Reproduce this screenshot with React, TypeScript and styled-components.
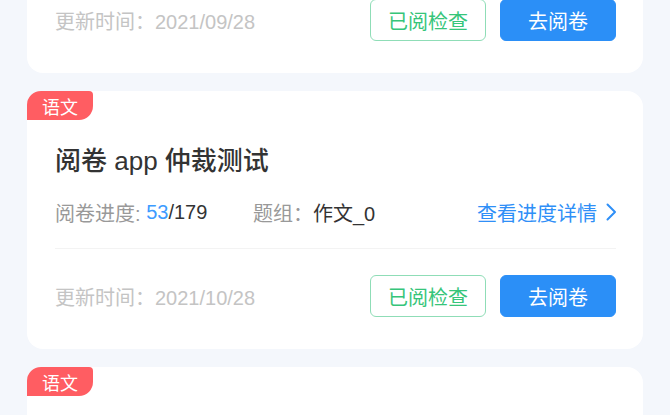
import styled, { createGlobalStyle } from 'styled-components';

type Task = {
  subject: string;
  title: string;
  done: number;
  total: number;
  group: string;
  updated: string;
};

const tasks: Task[] = [
  { subject: '语文', title: '阅卷 app 测试', done: 12, total: 179, group: '作文_0', updated: '2021/09/28' },
  { subject: '语文', title: '阅卷 app 仲裁测试', done: 53, total: 179, group: '作文_0', updated: '2021/10/28' },
  { subject: '语文', title: '阅卷 app 复评测试', done: 0, total: 179, group: '作文_0', updated: '2021/10/28' },
];

function ChevronRight() {
  return (
    <svg width="12" height="18" viewBox="0 0 12 18" fill="none">
      <polyline points="2.5,1.5 10,9 2.5,16.5" stroke="#2f8ff7" strokeWidth="2" strokeLinecap="round" strokeLinejoin="round" />
    </svg>
  );
}

function TaskCard({ task }: { task: Task }) {
  return (
    <Card>
      <SubjectTag>{task.subject}</SubjectTag>
      <Title>{task.title}</Title>
      <InfoRow>
        <InfoItem>
          <Label>阅卷进度: </Label>
          <Progress>{task.done}</Progress>
          <Value>/{task.total}</Value>
        </InfoItem>
        <InfoItem>
          <Label>题组：</Label>
          <Value>{task.group}</Value>
        </InfoItem>
        <DetailLink>
          查看进度详情
          <ChevronRight />
        </DetailLink>
      </InfoRow>
      <Divider />
      <Footer>
        <Updated>更新时间：{task.updated}</Updated>
        <Actions>
          <Button $variant="outline">已阅检查</Button>
          <Button $variant="primary">去阅卷</Button>
        </Actions>
      </Footer>
    </Card>
  );
}

export default function App() {
  return (
    <>
      <GlobalStyle />
      <Page>
        <List>
          {tasks.map((t, i) => (
            <TaskCard key={i} task={t} />
          ))}
        </List>
      </Page>
    </>
  );
}

const GlobalStyle = createGlobalStyle`
  html, body {
    margin: 0;
    padding: 0;
    background: #f4f7fc;
    font-family: "Liberation Sans", "Noto Sans CJK SC", sans-serif;
  }
`;

const Page = styled.div`
  width: 670px;
  height: 415px;
  overflow: hidden;
  background: #f4f7fc;
`;

const List = styled.div`
  display: flex;
  flex-direction: column;
  gap: 18px;
  padding: 0 27px;
  margin-top: -185px;
`;

const Card = styled.div`
  position: relative;
  height: 258px;
  box-sizing: border-box;
  padding: 52px 27px 32px 28px;
  background: #fff;
  border-radius: 16px;
  display: flex;
  flex-direction: column;
`;

const SubjectTag = styled.span`
  position: absolute;
  top: 0;
  left: 0;
  width: 66px;
  height: 29px;
  display: flex;
  align-items: center;
  justify-content: center;
  background: #ff5d62;
  color: #fff;
  font-size: 18px;
  border-radius: 14px 4px 14px 0;
`;

const Title = styled.div`
  font-size: 26px;
  line-height: 36px;
  font-weight: 500;
  color: #333;
`;

const InfoRow = styled.div`
  display: flex;
  align-items: center;
  margin-top: 19px;
  height: 28px;
  font-size: 20px;
`;

const InfoItem = styled.div`
  display: flex;
  align-items: center;
  min-width: 198px;
  white-space: pre;
`;

const Label = styled.span`
  color: #999;
`;

const Progress = styled.span`
  color: #3d9bff;
`;

const Value = styled.span`
  color: #333;
`;

const DetailLink = styled.a`
  margin-left: auto;
  margin-right: -1px;
  display: flex;
  align-items: center;
  gap: 8px;
  color: #2f8ff7;
  font-size: 20px;
  cursor: pointer;
`;

const Divider = styled.div`
  height: 1px;
  background: #f3f3f3;
  margin-top: 22px;
`;

const Footer = styled.div`
  display: flex;
  align-items: center;
  justify-content: space-between;
  margin-top: auto;
`;

const Updated = styled.span`
  color: #c4c4c4;
  font-size: 20px;
`;

const Actions = styled.div`
  display: flex;
  gap: 14px;
`;

const Button = styled.button<{ $variant: 'outline' | 'primary' }>`
  width: 116px;
  height: 42px;
  box-sizing: border-box;
  border-radius: 6px;
  font-family: inherit;
  font-size: 20px;
  cursor: pointer;
  border: 1px solid ${({ $variant }) => ($variant === 'primary' ? '#2b8ff7' : '#8fddb7')};
  background: ${({ $variant }) => ($variant === 'primary' ? '#2b8ff7' : '#fff')};
  color: ${({ $variant }) => ($variant === 'primary' ? '#fff' : '#36c57a')};
`;
